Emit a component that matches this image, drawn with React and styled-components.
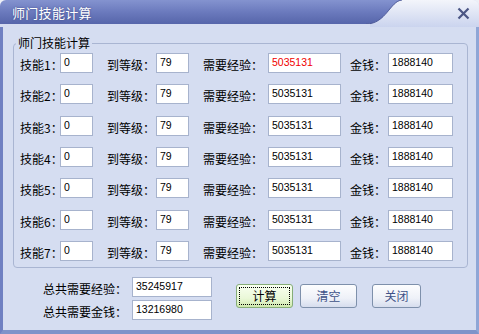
import React from 'react';
import styled, { createGlobalStyle } from 'styled-components';

const GlobalStyle = createGlobalStyle`
    html, body {
        margin: 0;
        padding: 0;
        background: #eef0f6;
    }
    body {
        font-family: "Noto Sans CJK SC", "DejaVu Sans", sans-serif;
        font-size: 12px;
        color: #000;
    }
`;

const titleSvg = `<svg xmlns='http://www.w3.org/2000/svg' width='479' height='27'>
<defs>
<linearGradient id='d' x1='0' y1='0' x2='0' y2='1'><stop offset='0' stop-color='#8493cf'/><stop offset='0.5' stop-color='#6b7abd'/><stop offset='1' stop-color='#5665aa'/></linearGradient>
<linearGradient id='l' x1='0' y1='0' x2='0' y2='1'><stop offset='0' stop-color='#f3f5fb'/><stop offset='1' stop-color='#cbd4ee'/></linearGradient>
</defs>
<rect width='479' height='27' fill='url(#l)'/>
<path d='M0 0 H402 C390 1 386 24 366 24 H0 Z' fill='url(#d)'/>
<path d='M366 24 C386 24 390 1 402 0' fill='none' stroke='#4e5a99' stroke-width='1'/>
<rect y='24' width='370' height='3' fill='#d5dcf1'/>
</svg>`;

const Window = styled.div`
    width: 479px;
    height: 334px;
    box-sizing: border-box;
    display: flex;
    flex-direction: column;
    border-radius: 6px 6px 0 0;
    overflow: hidden;
    background: #d5ddf1;
`;

const TitleBar = styled.div`
    height: 27px;
    flex: none;
    display: flex;
    align-items: center;
    justify-content: space-between;
    padding: 0 9px 3px 12px;
    box-sizing: border-box;
    background: url("data:image/svg+xml;utf8,${encodeURIComponent(titleSvg)}") no-repeat;
`;

const Title = styled.div`
    color: #fff;
    font-size: 13px;
    letter-spacing: 0.3px;
    text-shadow: 0 0 2px #3c4785;
`;

const Close = styled.div`
    width: 13px;
    height: 13px;
    display: flex;
    margin-top: 2px;
`;

const Body = styled.div`
    flex: 1;
    border-left: 3px solid #6f80c2;
    border-right: 3px solid #8fa6d6;
    border-bottom: 4px solid #7f93c9;
    padding: 8px 0 0 10px;
    display: flex;
    flex-direction: column;
`;

const Group = styled.fieldset`
    margin: 0;
    width: 455px;
    box-sizing: border-box;
    border: 1px solid #a9b5d2;
    border-radius: 4px;
    padding: 2px 0 6px 6px;
    display: flex;
    flex-direction: column;
    gap: 11.33px;
`;

const Legend = styled.legend`
    padding: 0 2px;
    margin-left: -4px;
    line-height: 16px;
    font-size: 12px;
`;

const Row = styled.div`
    display: grid;
    grid-template-columns: 40px 33px 63px 33px 79px 73px 47px 65px;
    align-items: end;
    height: 20px;
`;

const Label = styled.span`
    line-height: 16px;
    padding-left: ${p => p.$pad || 0}px;
    white-space: nowrap;
`;

const Field = styled.div`
    height: 20px;
    box-sizing: border-box;
    background: #fff;
    border: 1px solid #a7b3cd;
    padding: 1px 0 0 3px;
    font-family: "Liberation Sans", Arial, sans-serif;
    font-size: 10.5px;
    line-height: 14px;
    color: ${p => p.$red ? '#f00000' : '#000'};
`;

const Bottom = styled.div`
    display: flex;
    align-items: flex-start;
    padding: 9px 0 0 30px;
`;

const Totals = styled.div`
    display: grid;
    grid-template-columns: 89px 80px;
    row-gap: 3px;
    align-items: end;
`;

const Buttons = styled.div`
    display: flex;
    gap: 7px;
    margin: 7px 0 0 24px;
`;

const Button = styled.div`
    width: ${p => p.$w || 57}px;
    height: 24px;
    box-sizing: border-box;
    margin-left: ${p => p.$ml || 0}px;
    border: 1px solid #7e90ab;
    border-radius: 3px;
    background: linear-gradient(#fdfdfe, #eef1f8 60%, #d6ddee);
    color: #3e5288;
    display: flex;
    align-items: center;
    justify-content: center;
    font-size: 12px;
`;

const PrimaryButton = styled(Button)`
    border-color: #86ad78;
    background: linear-gradient(#f8fff0, #eaf8d8 60%, #cfe9ad);
    color: #000;
    padding: 2px;
    & > span {
        flex: 1;
        align-self: stretch;
        display: flex;
        align-items: center;
        justify-content: center;
        border: 1px dotted #000;
    }
`;

const rows = [1, 2, 3, 4, 5, 6, 7];

export default function App() {
    return (
        <>
            <GlobalStyle />
            <Window>
                <TitleBar>
                    <Title>师门技能计算</Title>
                    <Close>
                        <svg width="13" height="13" viewBox="0 0 13 13">
                            <path d="M1.5 1.5 L11.5 11.5 M11.5 1.5 L1.5 11.5" stroke="#4b5684" strokeWidth="2.2" />
                        </svg>
                    </Close>
                </TitleBar>
                <Body>
                    <Group>
                        <Legend>师门技能计算</Legend>
                        {rows.map(n => (
                            <Row key={n}>
                                <Label>技能{n}：</Label>
                                <Field>0</Field>
                                <Label $pad={14}>到等级：</Label>
                                <Field>79</Field>
                                <Label $pad={14}>需要经验：</Label>
                                <Field $red={n === 1}>5035131</Field>
                                <Label $pad={9}>金钱：</Label>
                                <Field>1888140</Field>
                            </Row>
                        ))}
                    </Group>
                    <Bottom>
                        <Totals>
                            <Label>总共需要经验：</Label>
                            <Field>35245917</Field>
                            <Label>总共需要金钱：</Label>
                            <Field>13216980</Field>
                        </Totals>
                        <Buttons>
                            <PrimaryButton><span>计算</span></PrimaryButton>
                            <Button>清空</Button>
                            <Button $w={49} $ml={8}>关闭</Button>
                        </Buttons>
                    </Bottom>
                </Body>
            </Window>
        </>
    );
}
